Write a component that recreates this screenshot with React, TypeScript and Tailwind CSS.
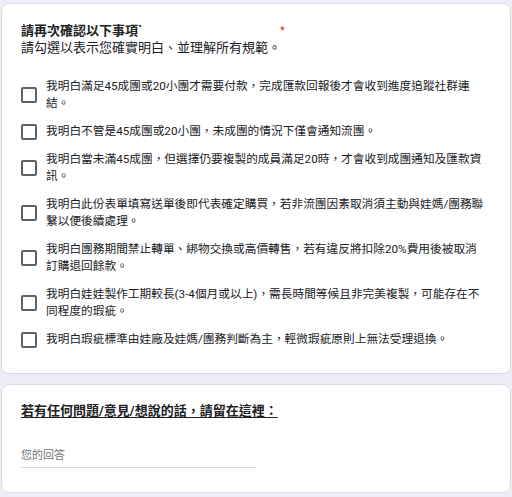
const items = [
  '我明白滿足45成團或20小團才需要付款，完成匯款回報後才會收到進度追蹤社群連結。',
  '我明白不管是45成團或20小團，未成團的情況下僅會通知流團。',
  '我明白當未滿45成團，但選擇仍要複製的成員滿足20時，才會收到成團通知及匯款資訊。',
  '我明白此份表單填寫送單後即代表確定購買，若非流團因素取消須主動與娃媽/團務聯繫以便後續處理。',
  '我明白團務期間禁止轉單、綁物交換或高價轉售，若有違反將扣除20%費用後被取消訂購退回餘款。',
  '我明白娃娃製作工期較長(3-4個月或以上)，需長時間等候且非完美複製，可能存在不同程度的瑕疵。',
  '我明白瑕疵標準由娃廠及娃媽/團務判斷為主，輕微瑕疵原則上無法受理退換。',
];

function Checkbox() {
  return <div className="w-4 h-4 shrink-0 rounded-[2px] border-2 border-[#5f6368] bg-white" />;
}

export default function App() {
  return (
    <div
      className="min-h-screen bg-[#f0ebf8] px-[1px] pt-[3px] pb-[3px] flex flex-col gap-[10px] text-[#202124]"
      style={{ fontFamily: 'Roboto, "Noto Sans CJK TC", sans-serif' }}
    >
      {/* 確認事項 */}
      <div className="bg-white border border-[#dadce0] rounded-lg pt-[18px] pb-[25px] pl-[19px] pr-[20px]">
        <div className="flex items-start">
          <div className="w-[259px] text-[13px] leading-[17px] font-bold">請再次確認以下事項`</div>
          <span className="mt-[2px] text-[#d93025] text-[11px] leading-[14px]">*</span>
        </div>
        <p className="text-[13px] leading-[17px]">請勾選以表示您確實明白、並理解所有規範。</p>

        <div className="mt-[22px] flex flex-col gap-[11px]">
          {items.map((t) => (
            <label key={t} className="flex items-center gap-[9px]">
              <Checkbox />
              <span className="w-[439px] text-[11.7px] leading-[17px]">{t}</span>
            </label>
          ))}
        </div>
      </div>

      {/* 留言 */}
      <div className="bg-white border border-[#dadce0] rounded-lg pt-[17px] pb-[24px] pl-[19px] pr-[20px]">
        <p className="text-[13px] leading-[17px] font-bold underline underline-offset-2">
          若有任何問題/意見/想說的話，請留在這裡：
        </p>
        <div className="mt-[29px] w-[236px] border-b border-[#dadce0] pb-[4px] text-[11px] leading-[15px] text-[#70757a]">
          您的回答
        </div>
      </div>
    </div>
  );
}
